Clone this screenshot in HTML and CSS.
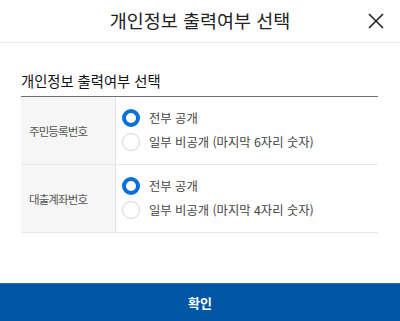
FILE: index.html
```html
<!DOCTYPE html>
<html lang="ko">
<head>
<meta charset="utf-8">
<link rel="stylesheet" href="styles.css">
</head>
<body>
<div class="page">
  <header class="header">
    <span></span>
    <h1 class="title">개인정보 출력여부 선택</h1>
    <button class="close" aria-label="닫기">
      <svg width="16" height="16" viewBox="0 0 16 16"><path d="M1 1L15 15M15 1L1 15" stroke="#222" stroke-width="1.6" fill="none"/></svg>
    </button>
  </header>
  <main class="content">
    <h2 class="section-title">개인정보 출력여부 선택</h2>
    <div class="table">
      <div class="row">
        <div class="label">주민등록번호</div>
        <div class="options">
          <label class="option"><span class="radio checked"></span><span class="opt-text">전부 공개</span></label>
          <label class="option"><span class="radio"></span><span class="opt-text">일부 비공개 (마지막 6자리 숫자)</span></label>
        </div>
      </div>
      <div class="row">
        <div class="label">대출계좌번호</div>
        <div class="options">
          <label class="option"><span class="radio checked"></span><span class="opt-text">전부 공개</span></label>
          <label class="option"><span class="radio"></span><span class="opt-text">일부 비공개 (마지막 4자리 숫자)</span></label>
        </div>
      </div>
    </div>
  </main>
  <button class="confirm">확인</button>
</div>
</body>
</html>
```
FILE: styles.css
```css
* { box-sizing: border-box; }
html, body { margin: 0; padding: 0; background: #fff; }
body { font-family: "Noto Sans CJK KR", "Noto Sans", sans-serif; color: #222; }
.page { width: 400px; height: 321px; display: flex; flex-direction: column; overflow: hidden; }
.header {
  height: 43px;
  border-bottom: 1px solid #e8e8e8;
  display: grid;
  grid-template-columns: 1fr auto 1fr;
  align-items: center;
}
.title { margin: 0; font-size: 18.5px; font-weight: 400; line-height: 24px; color: #222; padding-bottom: 2px; }
.close {
  justify-self: end;
  margin-right: 15px;
  width: 18px; height: 18px; padding: 1px;
  border: 0; background: none;
  display: flex; align-items: center; justify-content: center;
  margin-bottom: 1px;
}
.content { padding: 0 22px 0 21px; }
.section-title {
  margin: 28px 0 5px;
  font-size: 14.3px; font-weight: 400; line-height: 20px; color: #111;
}
.table { border-top: 1px solid #707070; }
.row { display: flex; height: 68px; border-bottom: 1px solid #e6e6e6; }
.label {
  width: 95px; flex: none;
  background: #f6f6f6;
  border-right: 1px solid #e6e6e6;
  display: flex; align-items: center;
  padding-left: 8px;
  font-size: 11.5px; letter-spacing: -0.9px; color: #555;
}
.options { display: flex; flex-direction: column; justify-content: center; padding-left: 6px; padding-bottom: 2px; }
.option { display: flex; align-items: center; height: 24px; gap: 9px; }
.radio {
  width: 18px; height: 18px; border-radius: 50%;
  border: 1px solid #d4d4d4; background: #fff; flex: none;
}
.radio.checked { border: 4px solid #0b6fd8; }
.opt-text { font-size: 12.3px; color: #444; }
.confirm {
  margin-top: auto;
  height: 38px; width: 100%;
  border: 0; border-top: 1px solid #2a6cb3;
  background: #0055a5; color: #fff;
  font-family: inherit; font-size: 13px; font-weight: 700;
}
```
